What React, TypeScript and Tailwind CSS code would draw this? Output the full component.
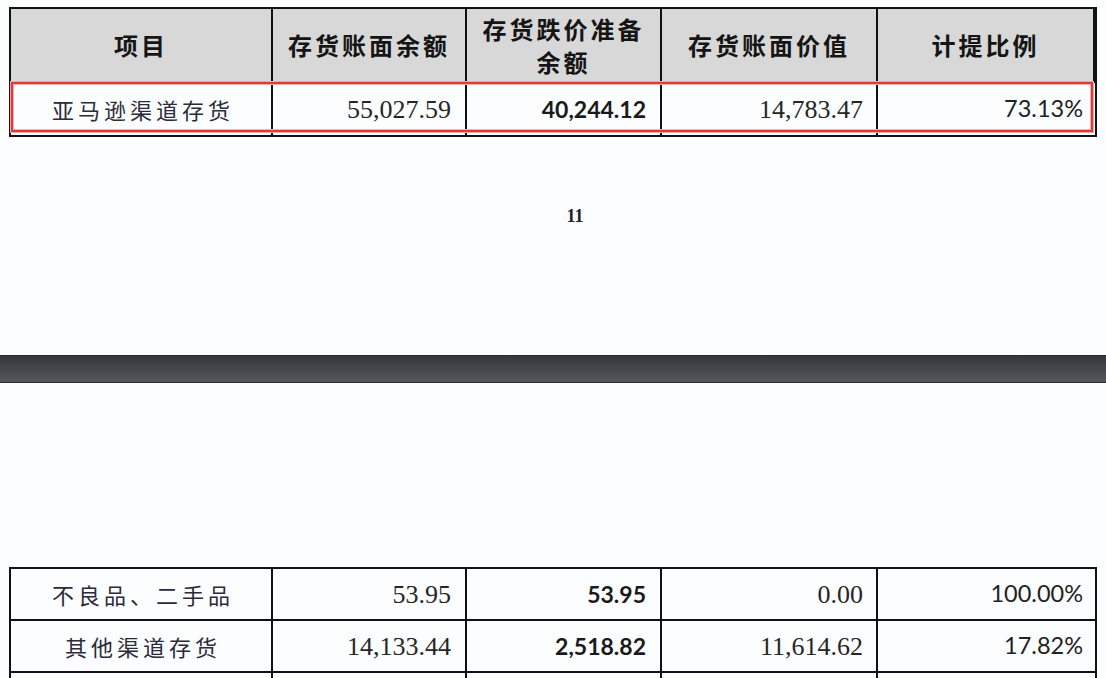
const cols = 'grid grid-cols-[262px_194px_195px_216px_217px]';

const cjk = "font-['Noto_Sans_CJK_SC',sans-serif]";
const serifNum = "font-['Liberation_Serif','Noto_Sans_CJK_SC',serif] text-[26px] text-[#262626]";
const boldNum = "font-['Lato',sans-serif] font-bold text-[23px] text-[#1a1a1a]";
const pctNum = "font-['Lato',sans-serif] text-[23.5px] text-[#222]";

type Row = { name: string; book: string; reserve: string; net: string; ratio: string };

const bottomRows: Row[] = [
  { name: '不良品、二手品', book: '53.95', reserve: '53.95', net: '0.00', ratio: '100.00%' },
  { name: '其他渠道存货', book: '14,133.44', reserve: '2,518.82', net: '11,614.62', ratio: '17.82%' },
];

function DataRow({ row, last }: { row: Row; last?: boolean }) {
  return (
    <div className={`${cols} h-[52px] ${last ? '' : 'border-b-2 border-[#111]'}`}>
      <div className={`flex items-center justify-center border-r-2 border-[#111] pl-[4px] ${cjk} text-[22px] tracking-[4px] text-[#2b2b3a]`}>
        {row.name}
      </div>
      <div className={`flex items-center justify-end border-r-2 border-[#111] pr-[14px] ${serifNum}`}>{row.book}</div>
      <div className={`flex items-center justify-end border-r-2 border-[#111] pr-[14px] ${boldNum}`}>{row.reserve}</div>
      <div className={`flex items-center justify-end border-r-2 border-[#111] pr-[13px] ${serifNum}`}>{row.net}</div>
      <div className={`flex items-center justify-end pr-[12px] ${pctNum}`}>{row.ratio}</div>
    </div>
  );
}

export default function App() {
  const head = `flex items-center justify-center border-r-2 border-[#111] ${cjk} font-bold text-[24px] tracking-[3px] text-[#151515]`;

  return (
    <div className="min-h-[678px] w-full bg-[#fcfdfe] pt-[7px]">
      {/* top table */}
      <div className="relative ml-[9px] w-[1088px] border-2 border-[#111]">
        <div className={`${cols} h-[74px] border-b-2 border-[#111] bg-[#d8d8d8]`}>
          <div className={head}>项目</div>
          <div className={head}>存货账面余额</div>
          <div className={`${head} flex-col leading-[33px]`}>
            <span>存货跌价准备</span>
            <span>余额</span>
          </div>
          <div className={head}>存货账面价值</div>
          <div className={`${head} border-r-0`}>计提比例</div>
        </div>
        <DataRow
          last
          row={{ name: '亚马逊渠道存货', book: '55,027.59', reserve: '40,244.12', net: '14,783.47', ratio: '73.13%' }}
        />
        {/* red highlight annotation */}
        <div className="pointer-events-none absolute left-[0px] top-[73px] h-[50px] w-[1082px] border-2 border-[#e0393b] shadow-[inset_0_0_0_1px_#f6b0b0,0_0_0_1px_#f3a5a5]" />
      </div>

      {/* page footer */}
      <div className="h-[218px] pt-[66px] pl-[44px] text-center font-['Liberation_Serif',serif] text-[18px] font-bold text-[#1f1d38]">
        11
      </div>

      {/* page break bar */}
      <div className="h-[28px] border-y border-[#2a2b2e] bg-gradient-to-b from-[#36373b] to-[#56575f]" />

      <div className="h-[184px]" />

      {/* bottom table */}
      <div className="ml-[9px] w-[1088px] border-x-2 border-t-2 border-[#111]">
        {bottomRows.map((r) => (
          <DataRow key={r.name} row={r} />
        ))}
        <div className={`${cols} h-[52px]`}>
          <div className="border-r-2 border-[#111]" />
          <div className="border-r-2 border-[#111]" />
          <div className="border-r-2 border-[#111]" />
          <div className="border-r-2 border-[#111]" />
          <div />
        </div>
      </div>
    </div>
  );
}
